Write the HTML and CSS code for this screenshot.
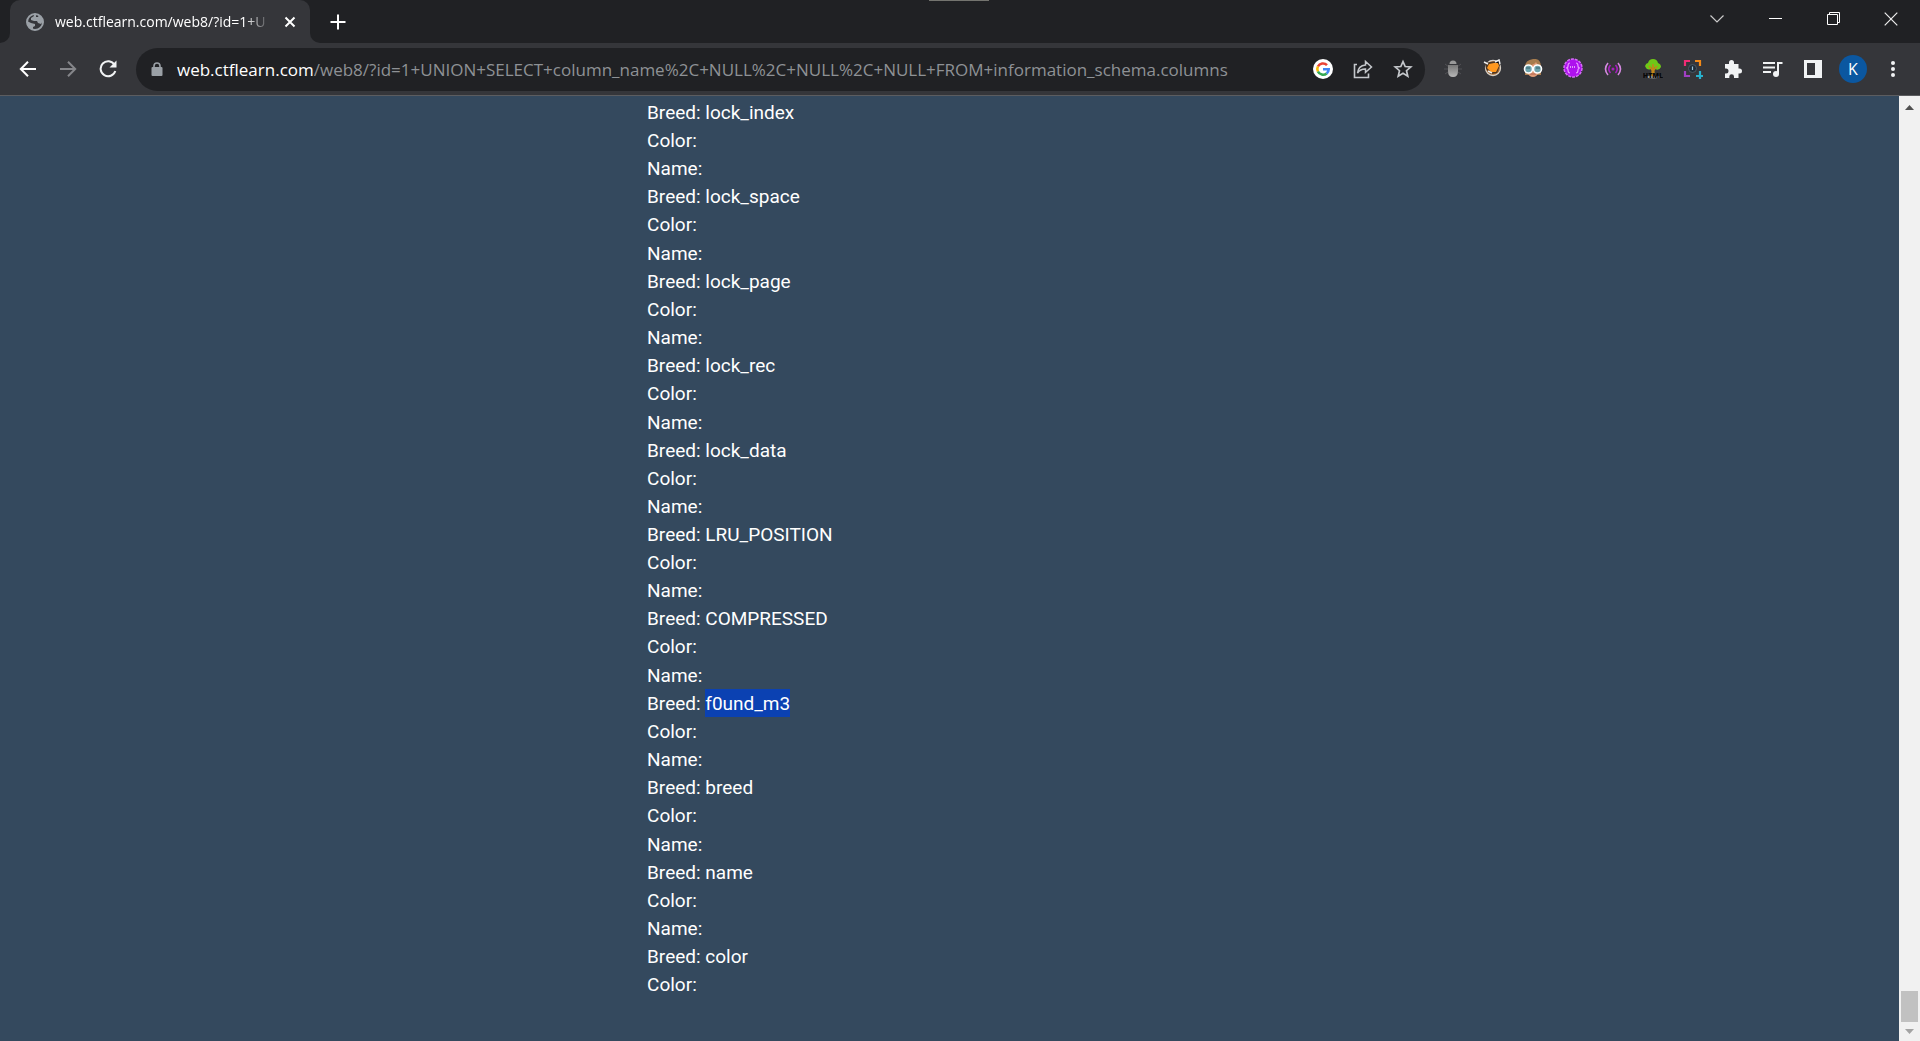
FILE: index.html
```html
<!DOCTYPE html>
<html lang="en">
<head>
<meta charset="utf-8">
<title>web.ctflearn.com/web8</title>
<link rel="stylesheet" href="styles.css">
</head>
<body>
<header class="browser">
  <span class="grip"></span>
  <div class="tabstrip">
    <span class="tab-edge left"></span>
    <div class="tab">
      <svg class="favicon" viewBox="0 0 18 18" width="18" height="18"><circle cx="9" cy="9" r="8" fill="#35363a" stroke="#9aa0a6" stroke-width="2"/><path d="M1 8L5 10L9 11V13L7 14V17A8 8 0 0 1 1 8ZM8 1V3L5 5V7L8 8H11L12 10L15 11L17 8A8 8 0 0 0 13 2L12 4H10V1Z" fill="#9aa0a6"/></svg>
      <span class="tab-title">web.ctflearn.com/web8/?id=1+U</span>
      <button class="tab-close" aria-label="Close tab"><svg viewBox="0 0 12 12" width="12" height="12"><path d="M1.5 1.5L10.5 10.5M10.5 1.5L1.5 10.5" stroke="#fff" stroke-width="2"/></svg></button>
    </div>
    <span class="tab-edge right"></span>
    <button class="new-tab" aria-label="New tab"><svg viewBox="0 0 16 16" width="16" height="16"><path d="M8 .5V15.500M.5 8H15.500" stroke="#fff" stroke-width="2"/></svg></button>
    <div class="window-controls">
      <button aria-label="Search tabs"><svg viewBox="0 0 14 8" width="14" height="8"><path d="M.5 .5L7 7L13.500 .5" fill="none" stroke="#ccc" stroke-width="1.200"/></svg></button>
      <button aria-label="Minimize"><svg viewBox="0 0 13 1" width="13" height="1"><path d="M0 .5H13" stroke="#fff"/></svg></button>
      <button aria-label="Restore"><svg viewBox="0 0 13 13" width="13" height="13"><path d="M.5 2.500H10.500V12.500H.5ZM2.500 2.500V.5H12.500V10.500H10.500" fill="none" stroke="#fff"/></svg></button>
      <button aria-label="Close"><svg viewBox="0 0 14 14" width="14" height="14"><path d="M.7 .7L13.300 13.300M13.300 .7L.7 13.300" stroke="#eee" stroke-width="1.200"/></svg></button>
    </div>
  </div>
  <div class="toolbar">
    <div class="tools">
      <button aria-label="Back"><svg viewBox="0 0 18 18" width="18" height="18"><path d="M17 9H2M9 1.800L1.800 9L9 16.200" fill="none" stroke="#fff" stroke-width="2"/></svg></button>
      <button aria-label="Forward"><svg viewBox="0 0 18 18" width="18" height="18"><path d="M1 9H16M9 1.800L16.200 9L9 16.200" fill="none" stroke="#85868a" stroke-width="2"/></svg></button>
      <button aria-label="Reload"><svg viewBox="0 0 18 18" width="18" height="18"><path d="M15.500 4.800A7.500 7.500 0 1 0 16.300 11" fill="none" stroke="#f1f3f4" stroke-width="2"/><path d="M17.500 .5V7.500H10.500Z" fill="#f1f3f4"/></svg></button>
    </div>
    <div class="address">
      <button class="lock" aria-label="Site information"><svg viewBox="0 0 12 14" width="12" height="14"><path d="M3 6V4A3 3 0 0 1 9 4V6" fill="none" stroke="#9aa0a6" stroke-width="1.600"/><rect x=".5" y="5" width="11" height="9" rx="1" fill="#9aa0a6"/></svg></button>
      <label for="url">web.ctflearn.com</label><input id="url" type="text" value="/web8/?id=1+UNION+SELECT+column_name%2C+NULL%2C+NULL%2C+NULL+FROM+information_schema.columns">
      <div class="tools">
        <button aria-label="Google"><svg viewBox="0 0 20 20" width="20" height="20"><circle cx="10" cy="10" r="10" fill="#fff"/><g fill="none" stroke-width="2.600"><path d="M14 6.200A5.700 5.700 0 0 0 4.900 7.500" stroke="#ea4335"/><path d="M4.900 7.500A5.700 5.700 0 0 0 4.900 12.500" stroke="#fbbc05"/><path d="M4.900 12.500A5.700 5.700 0 0 0 13.700 14.400" stroke="#34a853"/><path d="M13.700 14.400A5.700 5.700 0 0 0 15.700 10.200H10" stroke="#4285f4"/></g></svg></button>
        <button aria-label="Share"><svg viewBox="0 0 20 20" width="20" height="20"><path d="M4 5.500H1.500V18.500H15.500V14.500" fill="none" stroke="#c4c7cb" stroke-width="1.600"/><path d="M4.500 14C5 9 8 6.500 12.500 6V2.500L18.500 8L12.500 13.300V10C9 9.900 6.500 11 4.500 14Z" fill="none" stroke="#c4c7cb" stroke-width="1.500"/></svg></button>
        <button aria-label="Bookmark"><svg viewBox="0 0 20 20" width="20" height="20"><path d="M10 2.600L12.200 7.500L17.800 8L13.500 11.700L14.800 17.200L10 14.300L5.200 17.200L6.500 11.700L2.200 8L7.800 7.500Z" fill="none" stroke="#c4c7cb" stroke-width="1.700"/></svg></button>
      </div>
    </div>
    <div class="tools">
      <button aria-label="Bug extension"><svg viewBox="0 0 20 20" width="20" height="20"><defs><linearGradient id="bug" x2="0" y2="1"><stop stop-color="#777"/><stop offset="1" stop-color="#b8b8b8"/></linearGradient></defs><path d="M2 5L6 8M1 10H5M2 15L5 13M18 5L14 8M19 10H15M18 15L15 13" stroke="#515155"/><path d="M6.500 5A3.500 3.500 0 0 1 13.500 5Z" fill="#999"/><path d="M5 6H15V12Q15 18 10 18T5 12Z" fill="url(#bug)"/></svg></button>
      <button aria-label="Fox extension"><svg viewBox="0 0 20 20" width="20" height="20"><circle cx="10" cy="9" r="7.500" fill="#a9672a" stroke="#d8d1c7" stroke-width="1.300"/><path d="M2 4L7 3L14 2L17 6L14 14L8 15L3 10Z" fill="#4a3524"/><path d="M4 9L6 5L11 4L15 4L16 7L13 13L8 13Z" fill="#ff981f"/><path d="M1 3L5 5M12 3L16 1L17 5M5 12L9 14" stroke="#eee" stroke-width="1.500"/></svg></button>
      <button aria-label="Disguise extension"><svg viewBox="0 0 20 20" width="20" height="20"><path d="M2 16V8Q2 1 10 0T18 8V16Z" fill="#a67c4e"/><path d="M4 7Q11 6 13 3L16 8V13Q14 18 10 18T4 13Z" fill="#df9b76"/><path d="M7 15H13" stroke="#ad604f"/><g fill="#6da4ad" stroke="#fff" stroke-width="1.600"><circle cx="5.500" cy="10" r="4"/><circle cx="14.500" cy="10" r="4"/></g><path d="M3 9H7M13 9H17" stroke="#385e6a"/></svg></button>
      <button aria-label="Code extension"><svg viewBox="0 0 22 22" width="22" height="22"><circle cx="11" cy="10" r="9" fill="#ae12ee" stroke="#d66bf8" stroke-width="1.500" stroke-dasharray="3 1"/><path d="M8 5Q6 5 6 8Q6 10 4 10Q6 10 6 12Q6 15 8 15M14 5Q16 5 16 8Q16 10 18 10Q16 10 16 12Q16 15 14 15" fill="none" stroke="#e79aff" stroke-width="1.200"/><path d="M8 9H14" stroke="#f2c8ff" stroke-width="1.500" stroke-dasharray="1 1"/></svg></button>
      <button aria-label="Broadcast extension"><svg viewBox="0 0 18 16" width="18" height="16"><circle cx="9" cy="8" r="1.500" fill="#a620bd"/><g fill="none" stroke-width="1.600"><path d="M4 2Q-1 8 4 14M14 2Q19 8 14 14" stroke="#d58ae0"/><path d="M6.500 4Q3 8 6.500 12M11.500 4Q15 8 11.500 12" stroke="#a620bd"/></g></svg></button>
      <button aria-label="HTML Tree"><svg viewBox="0 0 20 20" width="20" height="20"><ellipse cx="10" cy="18" rx="7" ry="1.500" fill="#999"/><path d="M9 6H11L12 17H8Z" fill="#c38719"/><path d="M2 7Q3 4 5 4Q6 0 10 0Q14 0 15 4Q18 5 18 8Q16 12 12 10L10 7L8 10Q4 12 2 7Z" fill="#6fc817"/><path d="M6 7L10 12L14 7M10 5V16" fill="none" stroke="#c38719" stroke-width="1.500"/><text x="10" y="19" text-anchor="middle" class="tree-label">HTML</text></svg></button>
      <button aria-label="Capture"><svg viewBox="0 0 20 20" width="20" height="20"><g fill="none" stroke-width="2.200"><path d="M2 7V2H7" stroke="#f02c75"/><path d="M12 2H17V7" stroke="#f38a18"/><path d="M2 12V17H7" stroke="#a03fc2"/><path d="M17 12V20M13 17H20" stroke="#28b2ce"/></g><circle cx="9.500" cy="9.500" r="4" fill="#202d38" stroke="#4b5965"/><path d="M9.500 7.500V11" stroke="#9dc5dc" stroke-width="1.200"/></svg></button>
      <button aria-label="Extensions"><svg viewBox="0 0 20 20" width="20" height="20"><path d="M2 5H6V3.500A2.500 2.500 0 0 1 11 3.500V5H15.500V9.500H16.500A2.500 2.500 0 0 1 16.500 14.500H15.500V19H11V17.500A2.300 2.300 0 0 0 6.300 17.500V19H2V14.500H3A2.300 2.300 0 0 0 3 9.500H2Z" fill="#f1f3f4"/></svg></button>
      <button aria-label="Media"><svg viewBox="0 0 20 18" width="20" height="18"><path d="M0 3H12M0 7.500H12M0 12H8" stroke="#f1f3f4" stroke-width="2"/><path d="M15 14V3H19.500" fill="none" stroke="#f1f3f4" stroke-width="2"/><circle cx="13" cy="14" r="3" fill="#f1f3f4"/></svg></button>
      <button aria-label="Side panel"><svg viewBox="0 0 18 18" width="18" height="18"><path d="M0 0H18V18H0ZM3 3V15H11V3Z" fill="#f1f3f4" fill-rule="evenodd"/></svg></button>
      <button aria-label="Profile"><span class="avatar">K</span></button>
      <button aria-label="Menu"><svg viewBox="0 0 4 16" width="4" height="16"><g fill="#f1f3f4"><circle cx="2" cy="2" r="2"/><circle cx="2" cy="8" r="2"/><circle cx="2" cy="14" r="2"/></g></svg></button>
    </div>
  </div>
</header>
<div class="viewport">
  <main class="results">
    <div>Breed: lock_index<br>Color:</div>
    <div>Name:<br>Breed: lock_space<br>Color:</div>
    <div>Name:<br>Breed: lock_page<br>Color:</div>
    <div>Name:<br>Breed: lock_rec<br>Color:</div>
    <div>Name:<br>Breed: lock_data<br>Color:</div>
    <div>Name:<br>Breed: LRU_POSITION<br>Color:</div>
    <div>Name:<br>Breed: COMPRESSED<br>Color:</div>
    <div>Name:<br>Breed: <mark>f0und_m3</mark><br>Color:</div>
    <div>Name:<br>Breed: breed<br>Color:</div>
    <div>Name:<br>Breed: name<br>Color:</div>
    <div>Name:<br>Breed: color<br>Color:</div>
  </main>
  <div class="scrollbar">
    <svg viewBox="0 0 9 5" width="9" height="5"><path d="M0 5L4.500 0L9 5Z" fill="#505050"/></svg>
    <span class="thumb"></span>
    <svg viewBox="0 0 9 5" width="9" height="5"><path d="M0 0L4.500 5L9 0Z" fill="#a3a3a3"/></svg>
  </div>
</div>
</body>
</html>
```
FILE: styles.css
```css
* { box-sizing: border-box; }
body {
  margin: 0;
  min-height: 100vh;
  display: flex;
  flex-direction: column;
  background: #34495e;
  font-family: "Open Sans", sans-serif;
}
button {
  display: flex;
  align-items: center;
  justify-content: center;
  padding: 0;
  border: 0;
  background: none;
  font: inherit;
  color: inherit;
}
.browser {
  position: relative;
  background: #35363a;
  border-bottom: 1px solid #5c5d60;
}
.grip {
  position: absolute;
  top: 0;
  left: 50%;
  width: 60px;
  height: 1px;
  margin-left: -31px;
  background: #74746f;
}
.tabstrip {
  display: flex;
  height: 43px;
  background: #202124;
}
.tab-edge { width: 10px; background: #35363a; }
.tab-edge::before { content: ""; display: block; height: 100%; background: #202124; }
.left::before { border-bottom-right-radius: 10px; }
.right::before { border-bottom-left-radius: 10px; }
.tab {
  display: flex;
  align-items: center;
  width: 300px;
  padding: 0 8px 0 16px;
  border-radius: 10px 10px 0 0;
  background: #35363a;
}
.favicon { flex: none; }
.tab-title {
  flex: 1;
  margin-left: 11px;
  white-space: nowrap;
  font-size: 14px;
  color: #fff;
  mask-image: linear-gradient(to right, #000 190px, transparent 216px);
}
.tab-close { width: 24px; height: 24px; }
.new-tab { width: 36px; }
.window-controls { display: flex; height: 37px; margin-left: auto; }
.window-controls button { width: 58px; }
.toolbar {
  display: flex;
  align-items: center;
  gap: 8px;
  height: 52px;
  padding: 0 7px 0 8px;
}
.tools { display: flex; align-items: center; }
.tools button { width: 40px; height: 40px; }
.address {
  flex: 1;
  min-width: 0;
  display: flex;
  align-items: center;
  height: 43px;
  padding: 0 2px 0 9px;
  border-radius: 22px;
  background: #202124;
  font-size: 17px;
}
.lock { width: 24px; height: 24px; margin-right: 8px; }
.address label { color: #fff; }
.address input {
  flex: 1;
  min-width: 0;
  padding: 0;
  border: 0;
  background: none;
  font: inherit;
  color: #8e9195;
}
.tree-label { font: 900 7px "Open Sans", sans-serif; fill: #080808; }
.avatar {
  width: 28px;
  height: 28px;
  border-radius: 50%;
  background: #0b57a0;
  color: #fff;
  font-size: 16px;
  line-height: 28px;
}
.viewport { flex: 1; display: flex; }
.results {
  flex: 1;
  display: flex;
  flex-direction: column;
  justify-content: space-between;
  padding: 3px 0 42px 33.7%;
  font-family: Roboto, sans-serif;
  font-size: 19px;
  line-height: 28px;
  color: #fff;
}
mark { background: #0b41b2; color: #fff; padding: 3px 0 2px; }
.scrollbar {
  width: 21px;
  display: flex;
  flex-direction: column;
  align-items: center;
  padding: 9px 0 7px;
  background: #f1f1f1;
}
.thumb { width: 17px; height: 31px; margin: auto 0 7px; background: #c1c1c1; }
```
